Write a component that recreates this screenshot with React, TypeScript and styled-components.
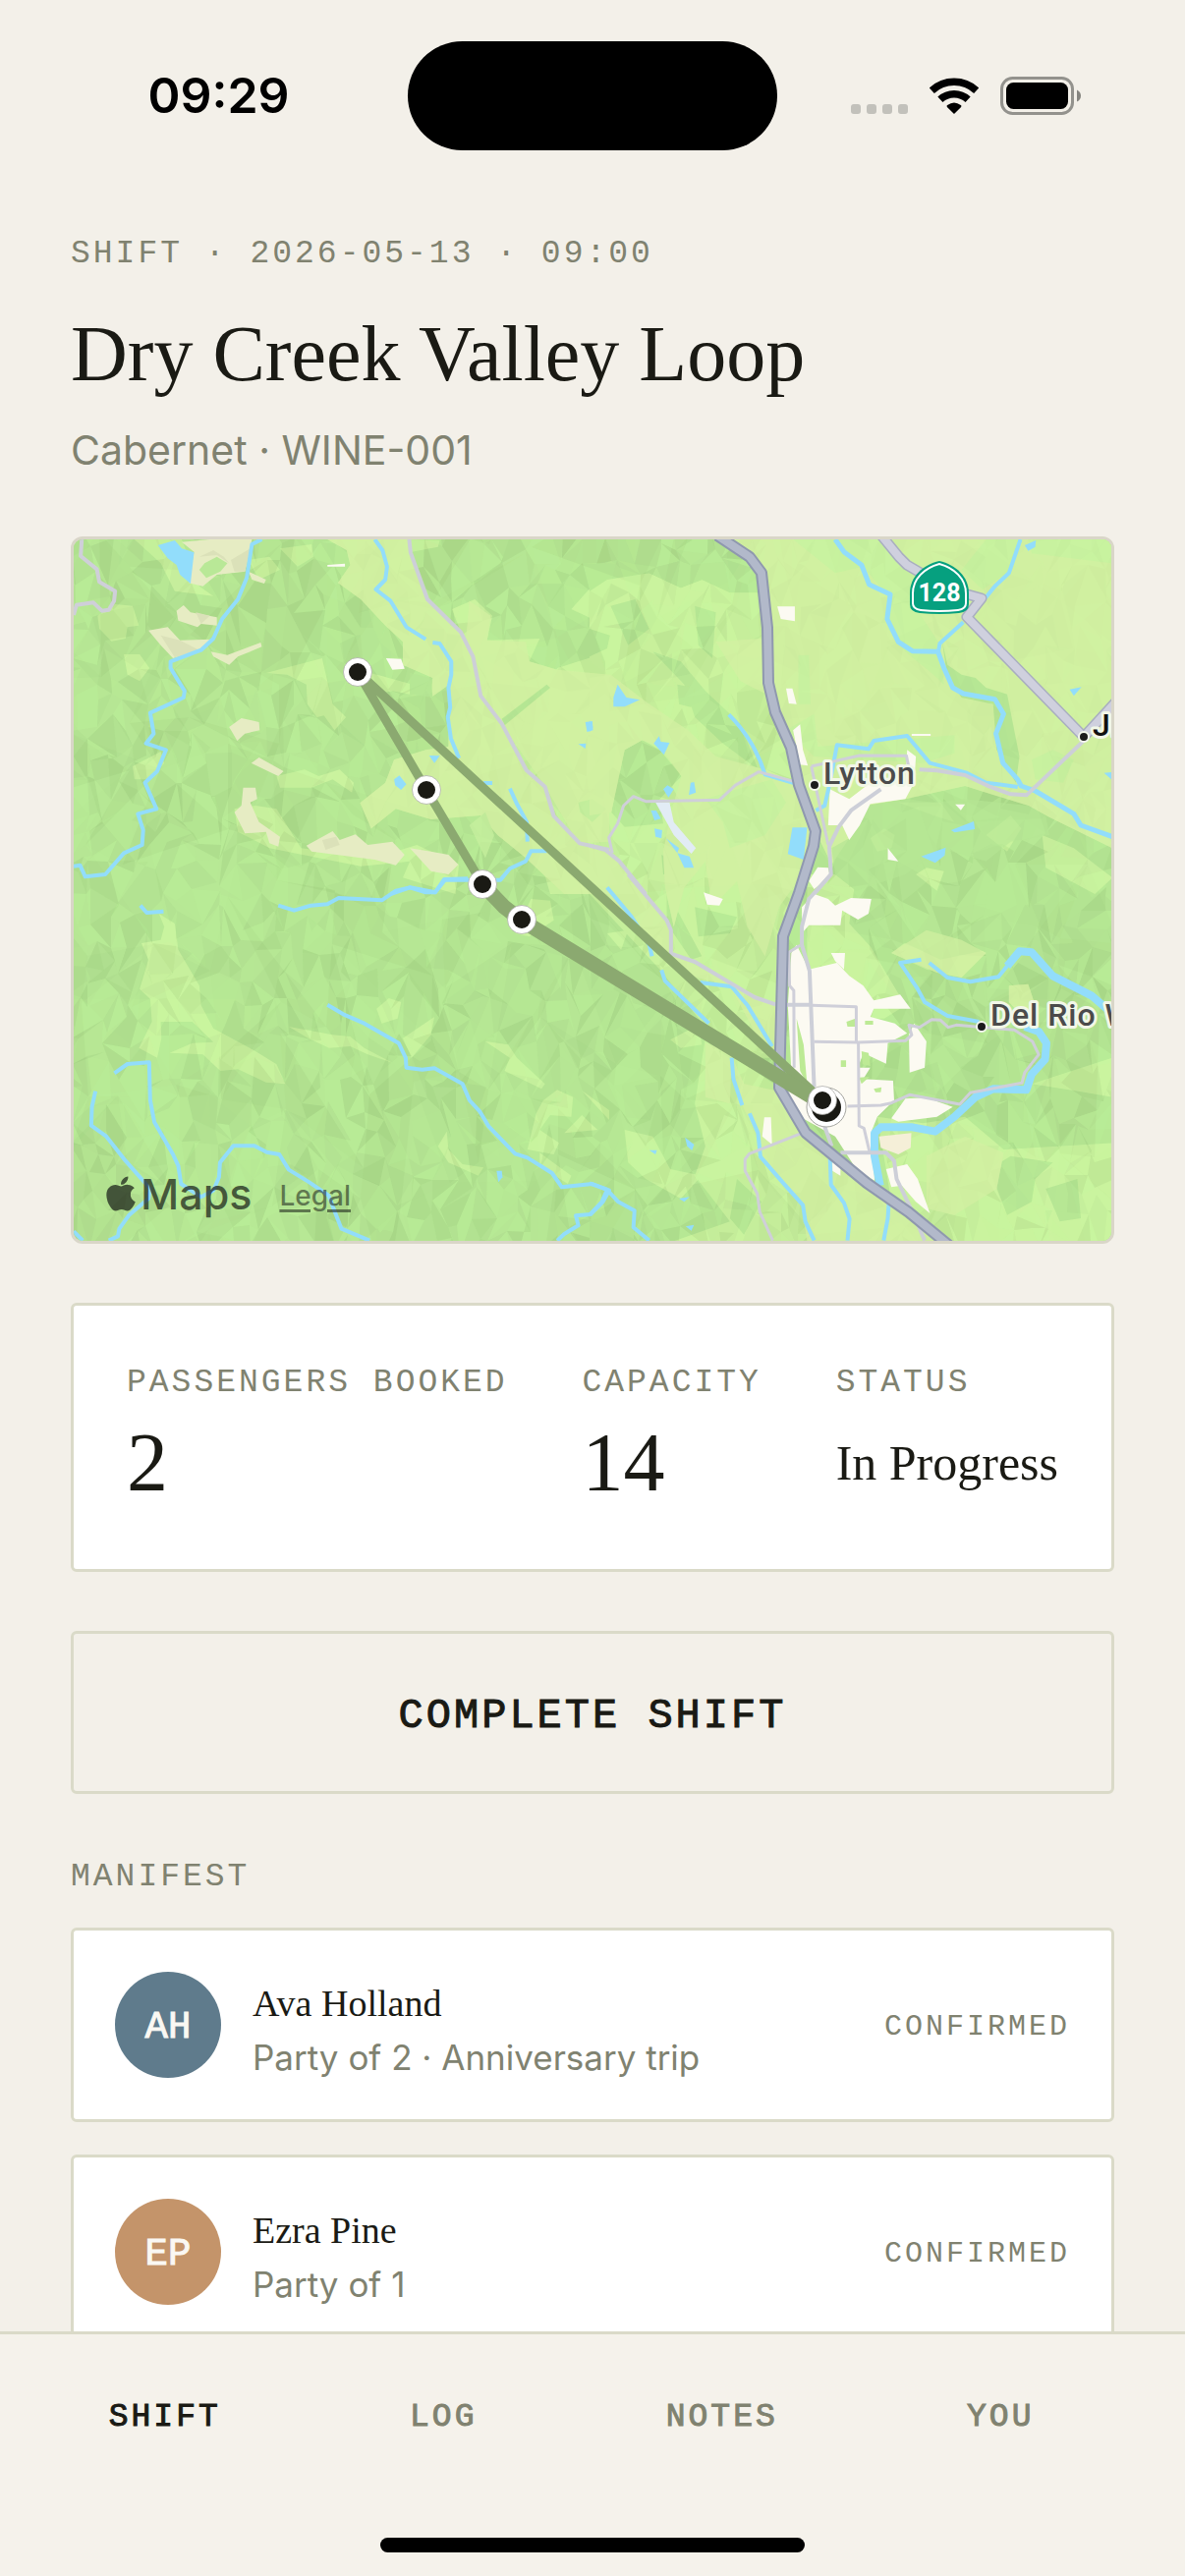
import React from "react";
import styled, { createGlobalStyle } from "styled-components";
import { FaApple } from "react-icons/fa";

const color = {
  page: "#f3f0e9",
  bar: "#f5f2eb",
  card: "#ffffff",
  line: "#dadac8",
  ink: "#1a1a14",
  muted: "#808270",
};

const font = {
  mono: `"Liberation Mono", "Courier New", monospace`,
  serif: `"Liberation Serif", "Times New Roman", serif`,
  sans: `Inter, "Noto Sans", sans-serif`,
};

const GlobalStyle = createGlobalStyle`
  * { box-sizing: border-box; }
  body { margin: 0; background: ${color.page}; color: ${color.ink}; font-family: ${font.sans}; }
  h1, h2, h3, p, dl, dt, dd, ul { margin: 0; padding: 0; font-weight: 400; }
`;

const Screen = styled.div`
  display: flex;
  flex-direction: column;
  height: 100vh;
  background: ${color.page};
`;

/* ---------- status bar ---------- */

const StatusBar = styled.header`
  flex: none;
  display: grid;
  grid-template-columns: 1fr 376px 1fr;
  align-items: center;
  height: 194px;
  color: #000;
`;

const Clock = styled.time`
  justify-self: center;
  padding-left: 30px;
  font-size: 50px;
  font-weight: 600;
  line-height: 60px;
`;

const Island = styled.div`
  height: 111px;
  border-radius: 56px;
  background: #000;
`;

const Indicators = styled.div`
  display: flex;
  align-items: center;
  justify-content: center;
  gap: 22px;
  padding-right: 32px;
`;

/* ---------- content ---------- */

const Content = styled.main`
  flex: 1;
  min-height: 0;
  overflow-y: auto;
  scrollbar-width: none;
  display: flex;
  flex-direction: column;
  gap: 60px;
  padding: 40px 72px 60px;
`;

const Label = styled.p`
  font-family: ${font.mono};
  font-size: 33px;
  line-height: 50px;
  letter-spacing: 3px;
  text-transform: uppercase;
  white-space: nowrap;
  color: ${color.muted};
`;

const Heading = styled.section`
  display: flex;
  flex-direction: column;
`;

const Title = styled.h1`
  padding: 18px 0 12px;
  font-family: ${font.serif};
  font-size: 80px;
  line-height: 116px;
`;

const Subtitle = styled.p`
  font-size: 41px;
  line-height: 56px;
  color: ${color.muted};
`;

const MapCard = styled.section`
  position: relative;
  flex: none;
  height: 720px;
  border: 3px solid #d9d6c8;
  border-radius: 12px;
  overflow: hidden;
  background: #b9e994;
`;

const MapCanvas = styled.svg`
  display: block;
  width: 100%;
  height: 100%;
`;

const Attribution = styled.div`
  position: absolute;
  left: 28px;
  bottom: 20px;
  display: flex;
  align-items: center;
  gap: 28px;
`;

const MapsBrand = styled.span`
  display: flex;
  align-items: center;
  font-size: 43px;
  font-weight: 500;
  line-height: 56px;
  color: rgba(20, 24, 20, 0.7);
`;

const LegalLink = styled.a`
  padding-top: 4px;
  font-size: 28px;
  font-weight: 500;
  line-height: 36px;
  color: rgba(20, 24, 20, 0.55);
  text-decoration: underline;
  text-decoration-thickness: 3px;
  text-underline-offset: 4px;
`;

const Stats = styled.dl`
  flex: none;
  display: flex;
  justify-content: space-between;
  height: 274px;
  padding: 54px 54px 0;
  border: 3px solid ${color.line};
  border-radius: 6px;
  background: ${color.card};
`;

const Stat = styled.div`
  display: flex;
  flex-direction: column;
`;

const StatValue = styled.dd<{ $size: number }>`
  font-family: ${font.serif};
  font-size: ${(p) => p.$size}px;
  line-height: 112px;
  white-space: nowrap;
`;

const ActionButton = styled.button`
  flex: none;
  height: 166px;
  padding: 8px 0 0;
  border: 3px solid ${color.line};
  border-radius: 6px;
  background: transparent;
  color: ${color.ink};
  font-family: ${font.mono};
  font-size: 42px;
  letter-spacing: 3px;
  text-transform: uppercase;
  -webkit-text-stroke: 1px ${color.ink};
`;

const Manifest = styled.section`
  display: flex;
  flex-direction: column;
  gap: 26px;
`;

const PassengerList = styled.ul`
  display: flex;
  flex-direction: column;
  gap: 33px;
  list-style: none;
`;

const PassengerCard = styled.li`
  display: flex;
  align-items: center;
  gap: 32px;
  padding: 42px;
  border: 3px solid ${color.line};
  border-radius: 6px;
  background: ${color.card};
`;

const Avatar = styled.div<{ $tone: string }>`
  display: grid;
  place-items: center;
  flex: none;
  width: 108px;
  height: 108px;
  padding-top: 5px;
  border-radius: 50%;
  background: ${(p) => p.$tone};
  color: #faf8f3;
  font-family: ${font.mono};
  font-size: 39px;
  -webkit-text-stroke: 1px #faf8f3;
`;

const PassengerText = styled.div`
  flex: 1;
  display: flex;
  flex-direction: column;
  gap: 4px;
  padding-top: 2px;
`;

const PassengerName = styled.h3`
  font-family: ${font.serif};
  font-size: 38px;
  line-height: 60px;
`;

const PassengerNote = styled.p`
  font-size: 35px;
  line-height: 42px;
  color: ${color.muted};
`;

const Badge = styled.span`
  padding-top: 4px;
  font-family: ${font.mono};
  font-size: 30px;
  line-height: 40px;
  letter-spacing: 3px;
  text-transform: uppercase;
  color: ${color.muted};
`;

/* ---------- tab bar ---------- */

const BottomBar = styled.footer`
  flex: none;
  display: flex;
  flex-direction: column;
  align-items: center;
  justify-content: space-between;
  height: 249px;
  padding-bottom: 24px;
  border-top: 3px solid ${color.line};
  background: ${color.bar};
`;

const Tabs = styled.nav`
  display: grid;
  grid-template-columns: repeat(4, 1fr);
  width: 100%;
  padding: 60px 46px 0 26px;
`;

const Tab = styled.button<{ $active?: boolean }>`
  border: 0;
  padding: 0;
  background: none;
  font-family: ${font.mono};
  font-size: 33px;
  line-height: 50px;
  letter-spacing: 3px;
  text-transform: uppercase;
  color: ${(p) => (p.$active ? color.ink : color.muted)};
  -webkit-text-stroke: 1px ${(p) => (p.$active ? color.ink : color.muted)};
`;

const HomeIndicator = styled.div`
  width: 432px;
  height: 15px;
  border-radius: 8px;
  background: #000;
`;

/* ---------- map drawing ---------- */

const hue = {
  flat: "#d2f1a2",
  hill: "#cbf39f",
  forest: "#b6e694",
  bare: "#e6ecc3",
  water: "#92ddfb",
  town: "#fcfaf2",
  road: "#cfcfd9",
  route: "#8ba970",
};

const W = 1056;
const H = 714;

/* Shaded relief: a jittered triangle mesh sorted into five brightness bins. */
function makeFacets(start: number, cx: number, cy: number) {
  let seed = start;
  const rnd = () => {
    seed = (seed * 1664525 + 1013904223) % 4294967296;
    return seed / 4294967296;
  };
  const cols = Math.ceil(W / cx) + 2;
  const rows = Math.ceil(H / cy) + 2;
  const pts: number[][][] = [];
  for (let r = 0; r < rows; r++) {
    pts.push([]);
    for (let c = 0; c < cols; c++) {
      pts[r].push([
        Math.round((c - 0.5 + (rnd() - 0.5) * 1.3) * cx),
        Math.round((r - 0.5 + (rnd() - 0.5) * 1.3) * cy),
      ]);
    }
  }
  const bins: string[] = ["", "", "", "", ""];
  const tri = (a: number[], b: number[], c: number[]) => {
    const i = Math.min(4, Math.floor(rnd() * 5));
    bins[i] += `M${a}L${b}L${c}Z`;
  };
  for (let r = 0; r < rows - 1; r++) {
    for (let c = 0; c < cols - 1; c++) {
      const a = pts[r][c];
      const b = pts[r][c + 1];
      const d = pts[r + 1][c];
      const e = pts[r + 1][c + 1];
      if (rnd() > 0.5) {
        tri(a, b, d);
        tri(b, e, d);
      } else {
        tri(a, b, e);
        tri(a, e, d);
      }
    }
  }
  return bins;
}

const relief = [
  { bins: makeFacets(41, 52, 70), strength: 0.5 },
  { bins: makeFacets(97, 15, 22), strength: 0.9 },
];
const facetPaint = [
  { fill: "#c4ff9e", opacity: 0.2 },
  { fill: "#c4ff9e", opacity: 0.1 },
  { fill: "#3c6430", opacity: 0 },
  { fill: "#3c6430", opacity: 0.03 },
  { fill: "#3c6430", opacity: 0.07 },
];

/* The drawing is split in four survey tiles, each with its own grid. */
const tile = {
  nw: "translate(-15 -19) scale(0.35714 0.33333)",
  ne: "translate(525 -19) scale(0.35714 0.33333)",
  sw: "translate(-15 341) scale(0.35714 0.33333)",
  se: "translate(525 341) scale(0.35714 0.33333)",
};

type Shape = { d: string; fill: string };
type Line = { d: string; stroke: string; width: number };

const area = (fill: string, ...ds: string[]): Shape[] => ds.map((d) => ({ d, fill }));
const line = (stroke: string, width: number, ...ds: string[]): Line[] =>
  ds.map((d) => ({ d, stroke, width }));

const hills = {
  nw: [
    ...area(
      hue.hill,
      "M215 57L350 57 400 200 440 230 330 215 290 130Z",
      "M110 290L160 255 210 260 228 320 195 325 190 360 150 368 115 330Z",
      "M185 408L230 408 258 450 230 490 195 470Z",
      "M540 120L600 110 630 150 570 180Z M630 85L720 72 725 110 680 140Z",
      "M1120 270L1185 240 1235 290 1220 365 1370 360 1340 430 1330 505 1390 505 1420 450 1568 400 1568 1140 1400 1140 1260 620 1200 530 1145 340Z",
      "M1460 270L1510 210 1568 190 1568 350 1520 300Z",
      "M590 465L750 420 780 560 818 600 785 640 755 595 735 600 708 560 705 500 650 470Z",
      "M500 880L560 870 620 880 690 1000 900 1030 1020 990 1140 1050 1130 1140 980 1090 1000 1040 860 1055 600 1000 510 950Z",
      "M620 780L700 760 740 780 800 760 840 800 835 830 780 790 720 815 630 815Z",
      "M210 750L290 705 300 740 260 790 215 790Z M995 57L1085 60 1080 80 1005 95Z",
      "M870 460L940 480 1040 510 1020 535 950 520 900 530Z",
    ),
  ],
  ne: [
    ...area(hue.hill, "M0 180L170 160 260 205 320 180 480 220 520 560 560 700 640 940 590 1140 0 1140Z"),
    ...area(
      hue.forest,
      "M0 57L345 57 450 110 480 220 400 220 320 180 260 205 170 160 50 180 0 215Z",
      "M100 700L150 670 200 700 262 780 200 850 210 925 100 935 62 890 80 780Z",
      "M205 1020L240 1040 235 1140 215 1140Z M0 330L58 350 50 390 0 415Z",
    ),
    ...area(
      "#b9e996",
      "M180 400L260 430 330 520 430 620 480 760 380 680 300 600 270 500Z",
      "M60 260L130 240 170 330 110 380Z M300 260L360 280 350 420 310 380Z M250 500L300 510 290 570 255 560Z",
    ),
  ],
  sw: area(
    hue.hill,
    "M285 120L330 150 340 230 400 340 405 400 440 470 560 540 620 580 645 640 590 635 510 595 460 600 410 550 315 545 380 515 440 512 380 450 290 450 292 500 280 560 228 530 265 450 260 380 230 350 255 260 235 210 290 200 300 160Z",
    "M655 465L780 490 830 495 870 530 950 575 880 550 830 525 770 530 710 500Z",
    "M905 410L940 378 975 390 965 440 920 455Z M1070 435L1060 490 1005 560 980 500Z",
    "M1215 510L1280 520 1305 560 1385 640 1375 655 1270 600 1285 560Z",
    "M1380 690L1420 658 1465 680 1460 740 1400 735 1370 780 1425 820 1410 855 1335 840 1360 730Z M1370 850L1460 920 1450 945 1370 890Z",
    "M1105 785L1110 840 1150 885 1210 895 1195 920 1110 880 1080 830Z",
    "M1345 75L1400 80 1410 140 1340 190 1300 180Z M1490 660L1568 720 1568 750Z M1440 790L1490 735 1535 780Z",
  ),
  se: [
    ...area(hue.hill, "M0 0L220 0 620 0 540 190 530 560 400 560 200 290 0 60Z M300 920L330 830 300 700 330 500 540 650 640 1120 240 1120 400 1060Z"),
    ...area(
      hue.hill,
      "M620 0L760 0 740 150 800 220 900 400 840 440 620 440Z",
      "M860 240L960 160 1060 200 1130 240 1040 310 960 290Z",
      "M820 740L950 760 1070 740 1180 840 1490 820 1490 1120 1020 1120 860 1000Z",
      "M1260 640L1490 560 1490 680 1380 660Z M1130 60L1200 20 1260 40 1250 110Z",
      "M100 780L180 800 230 900 320 920 260 990 160 930 110 880Z M230 505L310 460 320 520 260 530Z M50 180L110 170 90 230Z",
      "M1400 180L1490 120 1490 300Z",
    ),
    ...area(hue.forest, "M220 30L250 110 320 250 290 260 220 150Z M300 100L420 130 400 180 310 190Z"),
    ...area(hue.forest, "M1140 900L1200 860 1320 880 1270 930 1260 1000 1190 1040Z M1300 960L1390 930 1400 1050 1340 1060Z M420 930L490 1000 440 1100 400 1050Z"),
  ],
};

const flats = {
  nw: [
    ...area(
      hue.flat,
      "M765 57L1000 57 1010 120 1050 240 1145 340 1180 420 1200 530 1260 620 1330 760 1385 810 1410 900 1480 985 1568 1000 1640 1140 1440 1140 1330 1030 1250 960 1200 900 1060 912 960 880 890 940 858 862 930 800 955 730 1045 700 1110 690 1112 500 1060 540 1065 480 980 440 980 370 930 320 860 240 795 190 830 135 820 90Z",
      "M1170 245L1230 290 1220 365 1330 370 1340 430 1420 455 1568 470 1568 980 1480 985 1385 810 1260 620 1200 530 1160 360Z",
    ),
    ...area("#c3ee9c", "M1480 860L1520 850 1560 880 1520 920 1485 890Z M1170 930L1215 890 1240 960 1215 1030Z"),
    ...area("#b6e694", "M1262 605L1390 500 1400 510 1270 625Z M1000 465L1060 480 1065 540 1000 530Z"),
  ],
  ne: [
    ...area(
      hue.flat,
      "M400 57L1490 57 1490 1000 1300 900 1250 870 1070 810 900 850 790 870 740 970 690 1050 640 940 560 700 520 560 500 300 480 140 450 100Z",
      "M0 480L60 470 170 560 280 640 360 720 500 760 590 800 640 940 600 1090 540 1180 500 1330 450 1240 420 1100 350 1180 330 1040 270 1120 240 1240 215 1120 210 1010 230 900 262 780 200 690 150 670 100 700 62 890 0 900Z",
      "M360 370L490 360 505 530 430 490Z",
    ),
    ...area(
      "#c9f2a0",
      "M580 57L830 57 930 160 920 250 1000 380 1010 500 980 470 900 400 850 330 850 230 780 140 700 160Z",
      "M595 410L625 410 630 560 595 560Z M1250 57L1490 57 1490 130 1260 100Z M560 640L640 590 650 690 1040 655 1040 710 950 740 640 720Z",
      "M1130 57L1230 57 1190 160 1120 210 1060 150Z M1260 730L1320 700 1380 730 1350 800 1270 790Z",
      "M330 850L420 820 520 790 560 860 500 960 400 1000 380 920Z",
    ),
    ...area(
      hue.forest,
      "M1005 370L1020 440 1060 470 1100 480 1130 510 1190 530 1225 720 1215 800 1160 700 1150 560 1060 540 1020 480Z",
    ),
  ],
  sw: [] as Shape[],
  se: [
    ...area(
      hue.flat,
      "M0 -80L60 -60 110 0 225 150 240 245 400 330 530 400 530 560 480 500 400 340 250 300 160 200 50 60 0 20Z",
      "M330 515L400 560 435 705 480 800 490 870 600 1000 640 1120 700 1120 740 1050 690 940 680 840 600 790 530 660 440 640 400 540Z M330 515L405 560 400 700 330 680Z",
      "M490 840L600 790 720 860 850 1000 1000 1120 620 1120 600 980 510 900Z",
      "M960 860L1070 800 1180 850 1160 960 1040 1040 960 1020Z M860 240L960 170 1060 200 1130 240 1060 315 990 300Z",
      "M1195 340L1250 335 1270 400 1230 430 1195 390Z",
    ),
  ],
};

const details = {
  nw: [
    ...area(
      hue.bare,
      "M350 65L430 57 550 57 540 110 530 155 450 165 410 200 370 190 385 95Z",
      "M335 275L355 258 375 280 450 295 450 320 405 315 395 325 340 305Z",
      "M255 335L310 325 345 365 435 362 400 395 325 420 290 380Z",
      "M433 400L480 410 575 372 578 385 510 415 485 440 440 415Z",
      "M485 630L520 603 570 615 572 640 530 650 508 672Z M548 740L570 723 640 765 625 780Z",
      "M525 815L560 815 565 850 545 860 570 920 630 965 625 995 600 985 590 950 530 955 500 890 520 870Z",
      "M705 992L780 948 800 975 845 958 880 990 950 980 985 1020 960 1052 900 1035 720 1010Z",
      "M1000 1000L1060 1010 1110 1020 1138 1050 1110 1080 1060 1070Z M540 155L590 180 585 192 550 180Z",
    ),
    ...area("#dbe1b9", "M490 120L545 85 530 155 500 155Z M400 110L440 90 470 110 485 130 450 105Z M290 350L345 365 400 395 330 418Z M390 280L430 290 405 315Z M750 975L790 965 800 990 760 1005Z"),
    ...area("#b9e897", "M415 130L450 110 480 130 460 155 420 175 400 150Z"),
    ...area(hue.town, "M765 135L815 131 815 140 765 140Z M932 420L975 422 985 452 950 455Z"),
    ...area(
      hue.water,
      "M282 75L330 60 350 85 385 97 375 192 345 165 335 135 310 115Z",
      "M1055 717L1085 718 1070 740Z M955 790L970 778 990 805 975 822 958 808Z M1500 615L1520 612 1522 640 1505 645Z M1480 682L1502 680 1500 696Z",
    ),
  ],
  ne: [
    ...area(
      hue.town,
      "M535 262L585 262 585 307 545 300Z M560 512L578 512 590 560 568 558Z M580 640L600 622 608 700 622 748 600 745Z M918 651L972 651 972 657 918 657Z",
      "M685 820L740 850 800 800 900 800 905 700 930 720 925 800 900 850 800 865 770 930 740 975 720 930 680 930Z",
      "M625 1100L650 1058 680 1060 685 1085 640 1125Z M850 1000L880 1040 850 1035Z M1042 866L1070 866 1058 884Z",
    ),
    ...area("#e2ecf5", "M188 860L228 860 240 920 303 1000 290 1017 240 960Z"),
    ...area(
      hue.water,
      "M68 540L80 500 105 540 143 547 100 568 68 568Z M183 680L198 658 203 675 228 678 212 715Z M210 820L222 808 240 820 225 845Z M288 800L298 798 303 830 283 838Z",
      "M175 885L190 885 203 910 185 915Z M185 940L207 945 205 970 188 965Z M218 970L255 1000 250 1015Z M250 1015L285 1025 297 1060 270 1060Z",
      "M578 937L620 937 610 1035 565 1018Z M1030 945L1095 918 1098 942 1040 952Z M945 1025L1015 998 1012 1022 985 1045Z M1368 515L1402 508 1380 535Z M1240 75L1272 60 1270 80 1250 92Z M1466 770L1490 768 1490 793Z M0 610L10 630 0 645Z",
    ),
  ],
  sw: area(hue.water, "M1247 905L1262 905 1264 925 1252 940Z"),
  se: [
    ...area(
      hue.town,
      "M605 100L640 60 680 75 700 95 745 72 803 75 795 120 765 138 720 110 715 155 625 155 605 180Z",
      "M590 215L625 290 705 270 740 310 780 340 810 385 885 367 915 410 810 410 800 435 870 455 905 485 850 515 845 578 780 545 765 590 800 590 780 625 865 630 868 690 820 740 805 780 812 935 760 900 700 800 600 740 560 650 575 600 565 400 575 240Z",
      "M925 455L960 510 955 590 912 605 910 490Z M860 745L900 685 960 682 1035 710 990 740 880 755Z",
      "M845 900L905 885 935 930 970 1035 930 1000 890 950 860 955Z M498 742L517 742 520 825 492 800Z M692 860L715 870 715 920 692 905Z",
      "M325 55L380 75 370 95 335 92Z M688 240L728 240 725 290 700 265Z",
    ),
    ...area("#f5efd8", "M825 800L917 790 915 835 880 855 830 835Z"),
    ...area("#bdea95", "M732 450L758 440 758 465 735 465Z M785 447L808 447 808 459 785 459Z M716 568L731 568 731 588 716 588Z M768 620L798 618 775 640Z M810 655L832 650 830 665 815 665Z M590 440L610 520 620 640 600 600Z M775 540L795 545 800 585 778 580Z"),
    ...area(hue.water, "M272 803L298 825 292 843 278 830Z M170 842L192 842 188 855Z M255 990L285 985 270 1000Z M274 1075L298 1070 290 1088Z"),
  ],
};

const strokes = {
  nw: [
    ...line(
      hue.water,
      4,
      "M578 57L550 72 535 175 510 240 465 300 440 360 405 395 318 430 318 450 358 520 355 540 260 587 270 650 248 680 305 700 280 765 245 800 278 880 225 895 240 945 237 990 185 1015 132 1080 75 1087 60 1052 42 1055",
      "M900 57L922 90 935 140 930 180 903 210 945 245 990 325 1045 362",
      "M1065 372L1085 375 1118 430 1118 470 1110 510 1115 570 1108 600 1117 665 1140 725",
      "M1210 801L1235 801 M1285 818L1305 865 1333 920 1335 980",
      "M1390 1009L1345 1009 1330 1040 1285 1062 1258 1097 1100 1097 1072 1135 1000 1120 945 1140",
    ),
    ...line(hue.road, 4, "M65 57L62 108 108 148 115 187 160 215 157 245 142 272 122 275 98 250 50 257 42 288"),
    ...line("#cdcfd8", 4, "M998 57L1002 97 1050 240 1145 340 1180 415 1202 535 1262 620 1332 762 1385 812 1410 902 1484 985 1568 1005"),
  ],
  ne: [
    ...line(hue.water, 4, "M1228 57L1195 160 1155 200 1125 240 M1065 310L998 375 993 405"),
    ...line(
      hue.water,
      5,
      "M700 57L725 95 775 135 797 195 857 225 848 300 880 370 920 398 993 400 1010 450 1035 510 1065 528 1155 545 1180 590 1158 650 1178 740 1220 790 1230 810 1270 825 1380 895 1400 930 1490 965",
    ),
    ...line(
      hue.water,
      4,
      "M397 592Q470 670 500 775L585 802",
      "M645 885L670 870 685 800 705 685 795 697 810 672 905 657 970 740 1075 770 1130 800 1220 813",
    ),
    ...line(
      hue.road,
      3,
      "M585 797L482 767 415 808 370 853 160 857 125 842 97 870 80 925 55 968 65 1015",
      "M632 750L770 717 903 718 910 755 M632 750L680 990",
    ),
    ...line("#cdcfd8", 4, "M0 992L45 1005 85 1040 160 1140 M940 760L990 763 1070 777 1140 812 1200 835 1245 838 1410 670 M830 820L745 885 710 935 683 995 688 1080 640 1140"),
  ],
  sw: line(
    hue.water,
    4,
    "M625 95L670 110 718 95 765 91 797 72 920 79 960 50 1000 40 1045 55 1072 55 1098 15 1165 13",
    "M232 95L250 117 298 113",
    "M765 398L810 427 870 455 968 515 988 560 990 590 1035 596 1070 592 1150 640 1170 690 1200 725 1225 770 1300 853 1335 865 1405 912 1433 955 1520 945 1568 965 1550 1000 1515 1038 1473 1042 1480 1072 1440 1098 1420 1118",
    "M158 607L195 579 257 574 260 690 272 757 325 855 340 890 348 945 405 985 440 965 456 925 459 880 497 829 557 829 592 848 628 855 655 902 710 938 768 980 805 1082 885 1118",
    "M104 662L94 710 92 767 135 800 190 875 260 960 255 990 200 1040 172 1082 168 1105 142 1118 M42 1090L68 1118",
  ),
  se: [
    ...line(
      hue.water,
      4,
      "M0 943L50 963 82 1000 128 1027 125 1078 170 1118 M50 963L35 1000 0 1040",
      "M50 40L120 130 170 215 178 250 M205 292L215 325 340 455 M315 330L405 343 450 400 520 525",
      "M405 560L410 625 435 705 M456 730L480 790 487 862 550 940 608 1010 615 1060 640 1118",
      "M603 790L685 860 688 948 725 1003 741 1052 735 1118 M853 1000L850 1050 838 1118",
      "M945 260L885 270 935 350 955 390 1020 432 1110 450",
      "M968 270L1020 315 1085 328 1165 313 1190 280",
    ),
    ...line(
      hue.water,
      8,
      "M1190 280L1225 235 1260 238 1320 310 1430 370 1490 425",
      "M1240 465L1280 480 1302 515 1298 565 1260 610 1245 658 1150 655 1100 680 1040 740 985 785 920 772 830 772 812 790 812 860 828 950",
    ),
    ...line(
      hue.road,
      3,
      "M605 790L455 853 443 870 443 905 478 975 485 1030 522 1118",
      "M600 217L568 238 570 340 582 355 583 590",
      "M632 400L760 404 760 512 M640 511L765 513 900 508 918 490 910 460 940 467 975 443 1000 445 1022 467 1045 460 1210 475 1262 510 1280 550 1240 605 1232 637 1085 667 1055 702 912 673 860 698 830 705 735 708",
      "M766 512L768 768 782 775 798 848",
    ),
    ...line(
      "#cdcfd8",
      4,
      "M110 0L220 140 232 170 232 242 300 267 470 375 530 397",
      "M688 0L625 75 605 160 605 215 627 295 640 650",
      "M555 398L632 398 M670 770L690 830 M715 850L845 850 868 875 875 930 920 1030 955 1118",
    ),
  ],
};

const highway =
  "M655 -4L688 18 700 34 706 90 707 146 714 176 730 212 738 250 755 297 753 312 738 360 722 404 718 558 745 604 807 655 850 685 895 722";

const route128 = "M822 -4L840 18 848 26 872 40 M906 55L924 60 909 79 1028 201 1060 166";

const Areas = ({ items }: { items: Shape[] }) => (
  <>
    {items.map((s, i) => (
      <path key={i} d={s.d} fill={s.fill} />
    ))}
  </>
);

const Lines = ({ items }: { items: Line[] }) => (
  <>
    {items.map((s, i) => (
      <path
        key={i}
        d={s.d}
        fill="none"
        stroke={s.stroke}
        strokeWidth={s.width}
        strokeLinejoin="round"
        vectorEffect="non-scaling-stroke"
      />
    ))}
  </>
);

const tileKeys = ["nw", "ne", "sw", "se"] as const;

const stops = [
  [289, 135],
  [359, 255],
  [416, 351],
  [456, 387],
];

const Place = ({ x, y, name, tone }: { x: number; y: number; name: string; tone: string }) => (
  <g>
    <circle cx={x} cy={y} r="5" fill="#1c1c1c" stroke="#f4f8ee" strokeWidth="2" />
    <text
      x={x + 9}
      y={y - 1}
      fontFamily="Roboto, sans-serif"
      fontSize="32"
      fontWeight="500"
      letterSpacing="1"
      fill={tone}
      stroke="#f2f7e8"
      strokeWidth="6"
      strokeLinejoin="round"
      paintOrder="stroke"
    >
      {name}
    </text>
  </g>
);

function RouteMap() {
  return (
    <MapCanvas viewBox={`0 0 ${W} ${H}`} preserveAspectRatio="xMidYMid slice" role="img" aria-label="Route map">
      <rect width={W} height={H} fill={hue.forest} />
      {tileKeys.map((k) => (
        <g key={k} transform={tile[k]}>
          <Areas items={hills[k]} />
        </g>
      ))}
      {tileKeys.map((k) => (
        <g key={k} transform={tile[k]}>
          <Areas items={flats[k]} />
        </g>
      ))}
      <g transform={tile.ne}>
        <path
          d="M690 1000L740 970 790 870 900 850 980 860 1070 850 1250 870 1300 900 1490 1010 1490 1400 1180 1300 1000 1340 800 1240 760 1130 700 1080Z"
          fill={hue.forest}
        />
        <path
          d="M800 970L840 940 870 960 860 1000 820 1010Z M930 1080L960 1060 1010 1070 990 1130Z M1130 960L1200 900 1230 940 1190 1010Z M1290 960L1380 1000 1490 1090 1440 1140 1300 1060Z M880 860L1000 860 1040 920 980 900Z"
          fill={hue.hill}
        />
      </g>
      {relief.map(({ bins, strength }, n) => (
        <g key={n} opacity={strength}>
          {bins.map((d, i) => (
            <path key={i} d={d} {...facetPaint[i]} />
          ))}
        </g>
      ))}
      {tileKeys.map((k) => (
        <g key={k} transform={tile[k]} opacity="0.7">
          <Areas items={flats[k]} />
        </g>
      ))}
      <g transform={tile.ne}>
        <path
          d="M690 1000L740 970 790 870 900 850 980 860 1070 850 1250 870 1300 900 1310 960 1200 980 1130 1040 1000 1000 900 1080 760 1130 700 1080Z"
          fill={hue.forest}
          opacity="0.6"
        />
      </g>
      {tileKeys.map((k) => (
        <g key={k} transform={tile[k]}>
          <Areas items={details[k]} />
          <Lines items={strokes[k]} />
        </g>
      ))}

      <g fill="none" strokeLinejoin="round">
        <path d={route128} stroke="#a9aec0" strokeWidth="11" />
        <path d={route128} stroke="#cfd0de" strokeWidth="8" />
        <path d={highway} stroke="#8f98ae" strokeWidth="12" />
        <path d={highway} stroke="#b2b9ca" strokeWidth="8" />
      </g>

      <g fill="none" stroke={hue.route} strokeLinejoin="round">
        <path d="M762 571L289 135 359 255 416 351 456 387" strokeWidth="9" />
        <path d="M416 351L438 374 456 388 762 574" strokeWidth="15" />
      </g>

      <circle cx="766" cy="578" r="20" fill="#fff" stroke="#a5a5a0" />
      <circle cx="766" cy="578" r="15" fill={color.ink} />
      {[...stops, [762, 571]].map(([x, y]) => (
        <g key={x}>
          <circle cx={x} cy={y} r="14.5" fill="#fff" stroke="#a5a5a0" strokeWidth="0.7" />
          <circle cx={x} cy={y} r="9" fill={color.ink} />
        </g>
      ))}

      <g>
        <path
          d="M881 22C898 26 911 38 911 55V66Q911 74 901 75Q881 77 861 75Q851 74 851 66V55C851 38 864 26 881 22Z"
          fill="#06a07f"
        />
        <path
          d="M881 25C896 29 908 40 908 55V65Q908 71 900 72Q881 74 862 72Q854 71 854 65V55C854 40 866 29 881 25Z"
          fill="none"
          stroke="#fff"
          strokeWidth="2"
        />
        <text x="881" y="63" textAnchor="middle" fontFamily="Roboto, sans-serif" fontSize="25" fontWeight="700" fill="#fff">
          128
        </text>
      </g>

      <Place x={754} y={250} name="Lytton" tone="#4b4b4b" />
      <Place x={924} y={496} name="Del Rio Woods" tone="#4b4b4b" />
      <Place x={1028} y={201} name="Jimtown" tone="#111111" />
    </MapCanvas>
  );
}

/* ---------- status icons ---------- */

const SignalIcon = () => (
  <svg width="58" height="37" viewBox="0 0 58 37" aria-hidden="true">
    {[0, 16, 32, 48].map((x) => (
      <rect key={x} x={x} y="27" width="10" height="10" rx="3" fill="#c2c1bb" />
    ))}
  </svg>
);

const WifiIcon = () => (
  <svg width="50" height="37" viewBox="0 0 50 37" aria-hidden="true">
    <g fill="none" stroke="#000" strokeWidth="7.5">
      <path d="M2.3 13.2A33.3 33.3 0 0 1 47.7 13.2" />
      <path d="M10.9 22.3A20.7 20.7 0 0 1 39.1 22.3" />
    </g>
    <path d="M25 37L17.9 29.9Q17 28.8 18.2 28Q25 23 31.8 28Q33 28.8 32.1 29.9Z" />
  </svg>
);

const BatteryIcon = () => (
  <svg width="82" height="39" viewBox="0 0 82 39" aria-hidden="true">
    <rect x="1.5" y="1.5" width="72" height="36" rx="11" fill="none" stroke="#93928d" strokeWidth="3" />
    <rect x="6" y="6" width="63" height="27" rx="7.5" />
    <path d="M78 13.5Q82 15.5 82 19.5T78 25.5Z" fill="#85847f" />
  </svg>
);

/* ---------- page ---------- */

const passengers = [
  { initials: "AH", name: "Ava Holland", note: "Party of 2 · Anniversary trip", tone: "#5f7b8c" },
  { initials: "EP", name: "Ezra Pine", note: "Party of 1", tone: "#c4946a" },
];

const stats = [
  { label: "Passengers booked", value: "2", size: 84 },
  { label: "Capacity", value: "14", size: 84 },
  { label: "Status", value: "In Progress", size: 50 },
];

const tabs = ["Shift", "Log", "Notes", "You"];

export default function App() {
  return (
    <Screen>
      <GlobalStyle />
      <StatusBar>
        <Clock>09:29</Clock>
        <Island />
        <Indicators>
          <SignalIcon />
          <WifiIcon />
          <BatteryIcon />
        </Indicators>
      </StatusBar>

      <Content>
        <Heading>
          <Label>Shift · 2026-05-13 · 09:00</Label>
          <Title>Dry Creek Valley Loop</Title>
          <Subtitle>Cabernet · WINE-001</Subtitle>
        </Heading>

        <MapCard>
          <RouteMap />
          <Attribution>
            <MapsBrand>
              <FaApple size={40} />
              Maps
            </MapsBrand>
            <LegalLink href="#legal">Legal</LegalLink>
          </Attribution>
        </MapCard>

        <Stats>
          {stats.map((s) => (
            <Stat key={s.label}>
              <Label as="dt">{s.label}</Label>
              <StatValue $size={s.size}>{s.value}</StatValue>
            </Stat>
          ))}
        </Stats>

        <ActionButton type="button">Complete shift</ActionButton>

        <Manifest>
          <Label as="h2">Manifest</Label>
          <PassengerList>
            {passengers.map((p) => (
              <PassengerCard key={p.name}>
                <Avatar $tone={p.tone}>{p.initials}</Avatar>
                <PassengerText>
                  <PassengerName>{p.name}</PassengerName>
                  <PassengerNote>{p.note}</PassengerNote>
                </PassengerText>
                <Badge>Confirmed</Badge>
              </PassengerCard>
            ))}
          </PassengerList>
        </Manifest>
      </Content>

      <BottomBar>
        <Tabs>
          {tabs.map((t, i) => (
            <Tab key={t} type="button" $active={i === 0}>
              {t}
            </Tab>
          ))}
        </Tabs>
        <HomeIndicator />
      </BottomBar>
    </Screen>
  );
}
